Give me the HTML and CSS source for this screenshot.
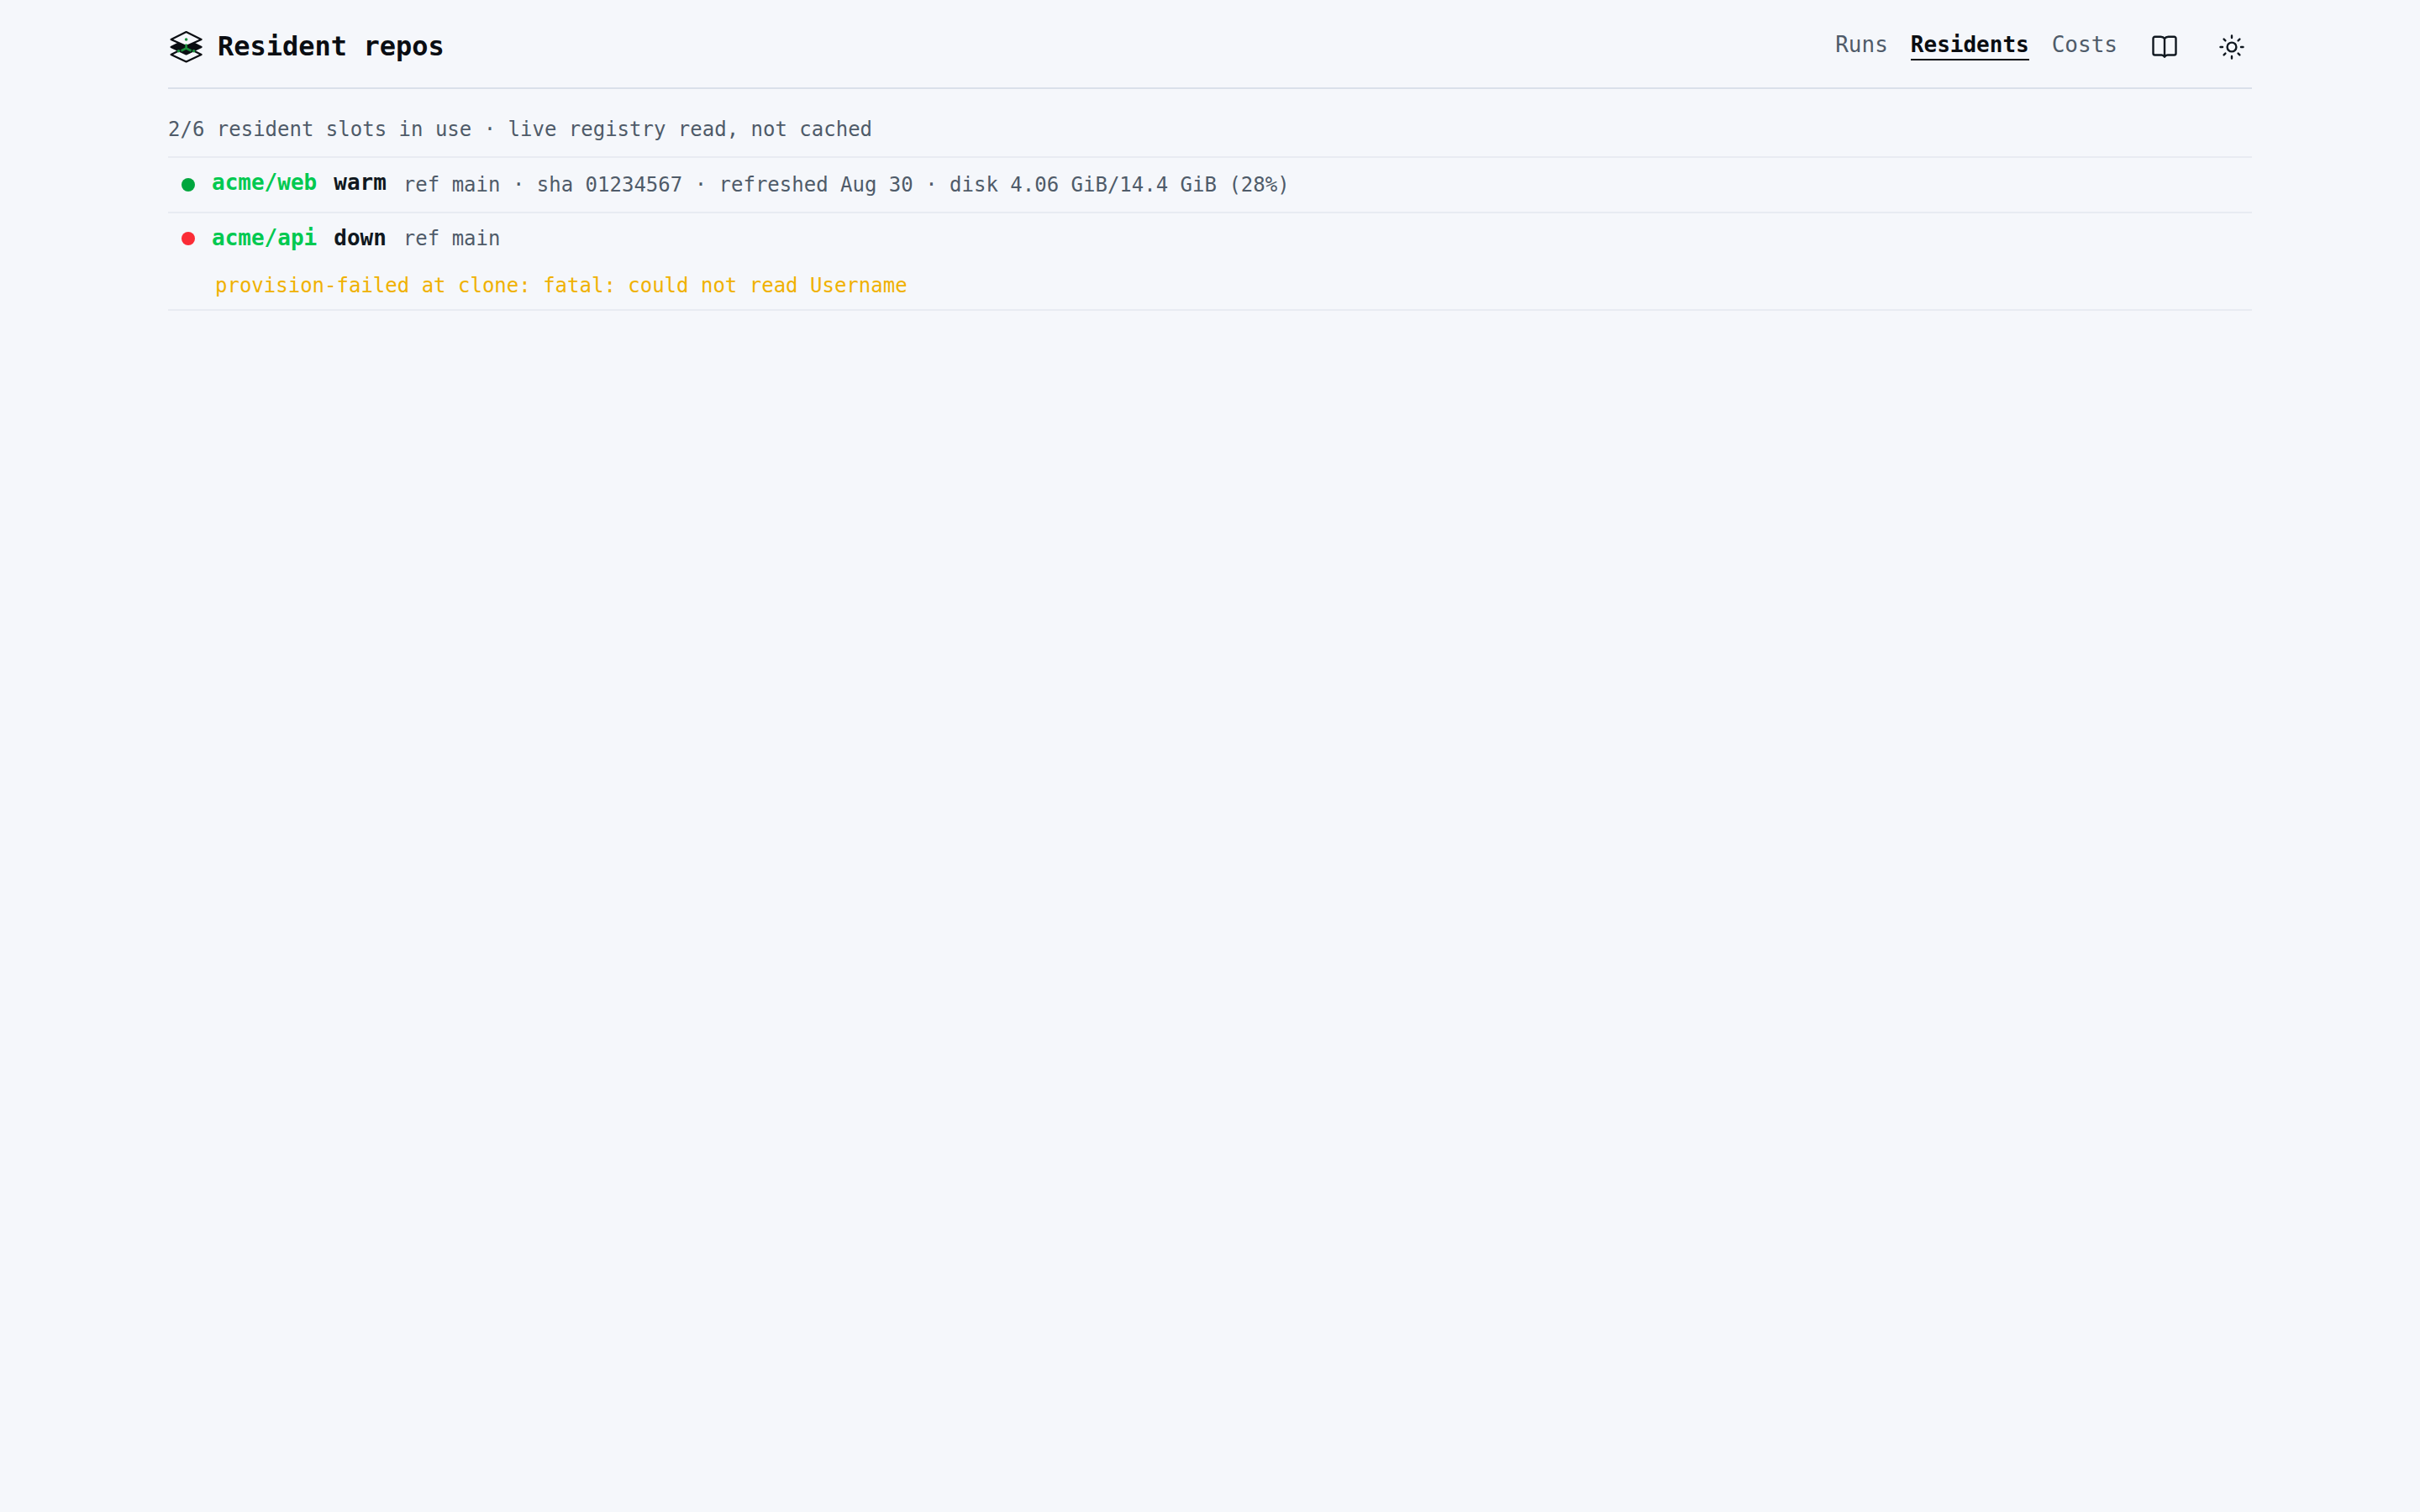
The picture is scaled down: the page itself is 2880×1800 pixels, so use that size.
FILE: index.html
```
<!DOCTYPE html>
<html lang="en">
    <head>
        <meta charset="utf-8">
        <meta name="viewport" content="width=device-width, initial-scale=1">
        <title>Resident repos</title>
        <link rel="stylesheet" href="styles.css">
    </head>

    <body>
        <!-- Header and nav -->
        <header class="header">
            <div class="brand">
                <svg class="logo" viewBox="0.4 0 44 44" aria-hidden="true">
                    <path class="logoSheet" d="M22 22L40 31 22 39.500 4 31Z"/>
                    <path class="logoCore" d="M22 13L40 22 22 30.500 4 22Z"/>
                    <path class="logoSheet" d="M22 4L40 13 22 21 4 13Z"/>
                    <path class="logoLink" d="M22 18.500V23.500L16 26.500M22 23.500L28 26.500"/>
                    <circle class="logoNode" cx="22" cy="13" r="1.800"/>
                    <circle class="logoNode" cx="13" cy="26.700" r="1.800"/>
                    <circle class="logoNode" cx="31" cy="26.700" r="1.800"/>
                </svg>
                <h1>Resident repos</h1>
            </div>

            <nav class="nav">
                <a href="#runs">Runs</a>
                <a href="#residents" class="active" aria-current="page">Residents</a>
                <a href="#costs">Costs</a>
                <a href="#docs" class="docsLink" aria-label="Docs">
                    <svg class="icon" viewBox="0 0 32 32" aria-hidden="true">
                        <path d="M16 6C15 4.500 13.200 3.800 11.500 3.800H4.500a2 2 0 0 0-2 2V23.500a2 2 0 0 0 2 2H12.500C14.500 25.500 15.200 26.400 16 27.700C16.800 26.400 17.500 25.500 19.500 25.500H27.500a2 2 0 0 0 2-2V5.800a2 2 0 0 0-2-2H20.500C18.800 3.800 17 4.500 16 6ZM16 6V27"/>
                    </svg>
                </a>
                <button type="button" class="themeButton" aria-label="Toggle theme">
                    <svg class="icon" viewBox="0 0 32 32" aria-hidden="true">
                        <circle cx="16" cy="16" r="5.400"/>
                        <path d="M16 2.500V5M16 27V29.500M2.500 16H5M27 16H29.500M6.600 6.600L8.400 8.400M23.600 23.600L25.400 25.400M6.600 25.400L8.400 23.600M23.600 8.400L25.400 6.600"/>
                    </svg>
                </button>
            </nav>
        </header>

        <!-- Resident list -->
        <main>
            <p class="summary">2/6 resident slots in use · live registry read, not cached</p>
            <ul class="residents">
                <li>
                    <div class="resident">
                        <span class="dot warm"></span>
                        <a href="#acme/web" class="repo">acme/web</a>
                        <strong class="state">warm</strong>
                        <span class="meta">ref main · sha 01234567 · refreshed Aug 30 · disk 4.06 GiB/14.4 GiB (28%)</span>
                    </div>
                </li>
                <li>
                    <div class="resident failed">
                        <span class="dot down"></span>
                        <a href="#acme/api" class="repo">acme/api</a>
                        <strong class="state">down</strong>
                        <span class="meta">ref main</span>
                    </div>
                    <p class="reason">provision-failed at clone: fatal: could not read Username</p>
                </li>
            </ul>
        </main>
    </body>
</html>
```

FILE: styles.css
```
* {
    box-sizing: border-box;
}

body {
    margin: 0;
    padding: 0 200px;
    background: #f5f7fb;
    color: #101820;
    font-family: "DejaVu Sans Mono", monospace;
    font-size: 24px;
    line-height: 36px;
}

/* Header */

.header {
    display: flex;
    justify-content: space-between;
    align-items: center;
    height: 106px;
    border-bottom: 2px solid #dae0ea;
    padding-top: 8px;
}

.brand {
    display: flex;
    align-items: center;
    gap: 15px;
}

.logo {
    width: 44px;
    height: 44px;
}

.logoSheet {
    fill: #f5f7fb;
    stroke: #0a0d12;
    stroke-width: 2.2;
    stroke-linejoin: round;
}

.logoCore {
    fill: #0a0d12;
    stroke: #0a0d12;
    stroke-width: 2.2;
    stroke-linejoin: round;
}

.logoLink {
    fill: none;
    stroke: #1a8f3c;
    stroke-width: 2.6;
}

.logoNode {
    fill: #1a8f3c;
}

h1 {
    margin: 0;
    padding-bottom: 2px;
    color: #0a0d12;
    font-size: 32px;
    line-height: 44px;
}

.nav {
    display: flex;
    align-items: center;
    gap: 27px;
    font-size: 26px;
}

.nav a {
    margin-bottom: 2px;
    padding-bottom: 2px;
    color: #4f5b69;
    text-decoration: none;
    line-height: 30px;
    border-bottom: 2px solid transparent;
}

.nav .active {
    color: #0a0d12;
    font-weight: bold;
    border-bottom-color: #0a0d12;
}

.nav .docsLink,
.themeButton {
    display: flex;
    align-items: center;
    justify-content: center;
    height: 48px;
    margin: 0;
    padding: 0;
    border: none;
    background: none;
    color: #101820;
}

.nav .docsLink {
    width: 58px;
}

.themeButton {
    width: 48px;
}

.icon {
    width: 32px;
    height: 32px;
    fill: none;
    stroke: #101820;
    stroke-width: 2.4;
    stroke-linecap: round;
    stroke-linejoin: round;
}

/* Residents */

.summary {
    margin: 0;
    padding: 30px 0 14px;
    color: #4f5b69;
}

.residents {
    margin: 0;
    padding: 0;
    list-style: none;
    border-top: 2px solid #e8ebf2;
}

.residents li {
    padding: 10px 16px;
    border-bottom: 2px solid #e8ebf2;
}

.resident {
    display: flex;
    align-items: center;
    gap: 20px;
    height: 44px;
}

.resident.failed {
    height: 40px;
}

.dot {
    width: 16px;
    height: 16px;
    border-radius: 50%;
}

.dot.warm {
    background: #00a63e;
}

.dot.down {
    background: #fb2c36;
}

.repo,
.state {
    align-self: flex-start;
    font-size: 26px;
    font-weight: bold;
    line-height: 38px;
}

.repo {
    color: #00c950;
    text-decoration: none;
}

.meta {
    color: #4f5b69;
}

.reason {
    margin: 0;
    padding: 18px 0 0 40px;
    color: #f0b100;
}
```
